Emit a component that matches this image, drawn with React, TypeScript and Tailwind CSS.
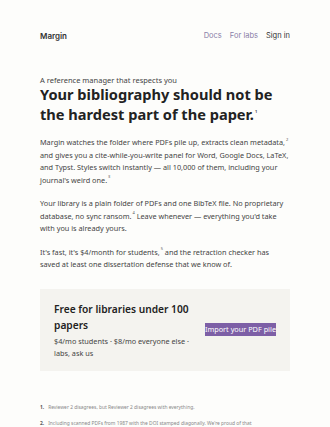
import React from "react";

const Sup = ({ n }: { n: string }) => (
  <sup className="text-[4px] leading-none text-[#555] relative top-[-1px] align-super ml-[1px]">{n}</sup>
);

export default function App() {
  return (
    <div className="min-h-[427px] w-[330px] bg-[#fdfdfb] text-[#2a2a2a] font-['Noto_Sans',sans-serif] overflow-hidden">
      <div className="px-10">
        <nav className="flex items-center justify-between pt-[29px] h-[42px] font-['Inter',sans-serif] text-[7.5px]">
          <div className="font-semibold text-[#333] text-[8px]">Margin</div>
          <div className="flex gap-[8px]">
            <span className="text-[#8a80a8]">Docs</span>
            <span className="text-[#8a80a8]">For labs</span>
            <span className="text-[#333]">Sign in</span>
          </div>
        </nav>
        <div className="mt-[33px] text-[7.5px] text-[#444] leading-[10px]">A reference manager that respects you</div>
        <h1 className="text-[14.6px] font-bold leading-[20px] text-[#222] mt-[-1px]">
          Your bibliography should not be the hardest part of the paper.<Sup n="1" />
        </h1>
        <div className="text-[7.3px] leading-[12.5px] text-[#444] mt-[12px] space-y-[11px]">
          <p>
            Margin watches the folder where PDFs pile up, extracts clean metadata,<Sup n="2" /> and gives you a cite-while-you-write panel for Word, Google Docs, LaTeX, and Typst. Styles switch instantly — all 10,000 of them, including your journal's weird one.<Sup n="3" />
          </p>
          <p>
            Your library is a plain folder of PDFs and one BibTeX file. No proprietary database, no sync ransom.<Sup n="4" /> Leave whenever — everything you'd take with you is already yours.
          </p>
          <p>
            It's fast, it's $4/month for students,<Sup n="5" /> and the retraction checker has saved at least one dissertation defense that we know of.
          </p>
        </div>
        <div className="mt-[18px] bg-[#f4f3ef] flex items-center justify-between px-[14px] h-[82px]">
          <div className="w-[140px]">
            <div className="text-[10.2px] font-semibold leading-[16px] text-[#222] w-[150px]">Free for libraries under 100 papers</div>
            <div className="text-[7.3px] leading-[12px] text-[#444] mt-[2px]">$4/mo students · $8/mo everyone else · labs, ask us</div>
          </div>
          <div className="bg-[#7d5fa6] text-white text-[7.3px] leading-[13px] px-0">Import your PDF pile</div>
        </div>
        <ol className="mt-[33px] text-[4.9px] text-[#888] space-y-[9px]">
          <li className="flex gap-[4px]"><span className="font-bold text-[#555]">1.</span><span>Reviewer 2 disagrees, but Reviewer 2 disagrees with everything.</span></li>
          <li className="flex gap-[4px]"><span className="font-bold text-[#555]">2.</span><span>Including scanned PDFs from 1987 with the DOI stamped diagonally. We're proud of that</span></li>
        </ol>
      </div>
    </div>
  );
}
